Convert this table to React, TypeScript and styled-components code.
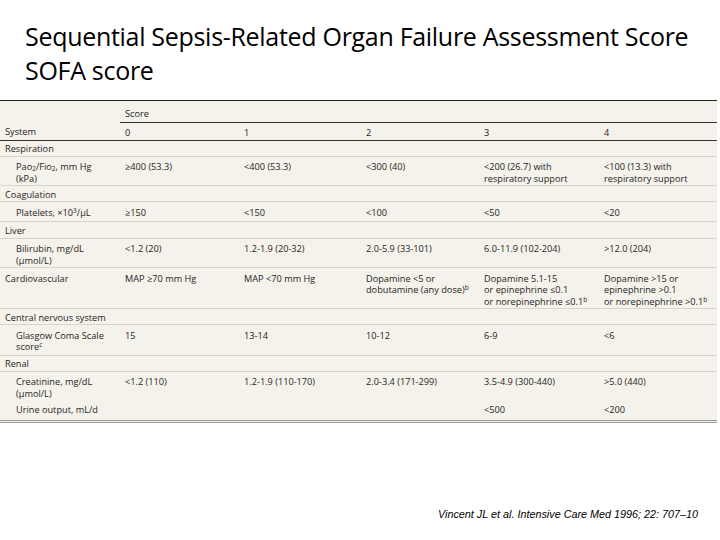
import React from "react"
import styled, { createGlobalStyle } from "styled-components"

const GlobalStyle = createGlobalStyle`
  html, body {
    margin: 0;
    padding: 0;
    background: #ffffff;
  }
  body {
    width: 720px;
    height: 540px;
    overflow: hidden;
  }
`

const Slide = styled.div`
  width: 720px;
  height: 540px;
  display: flex;
  flex-direction: column;
  background: #fff;
`

const Title = styled.h1`
  margin: 0;
  padding: 19px 0 0 25px;
  font-family: "Open Sans", "Liberation Sans", sans-serif;
  font-weight: 400;
  font-size: 25px;
  line-height: 34px;
  color: #000;
  letter-spacing: -0.3px;
`

const TableWrap = styled.div`
  margin-top: 13px;
  width: 717px;
  background: #f4f2ea;
  border-top: 1px solid #222;
  border-bottom: 3px double #9a9a9a;
`

const Table = styled.table`
  width: 100%;
  border-collapse: collapse;
  table-layout: fixed;
  font-family: "Open Sans", "Liberation Sans", sans-serif;
  font-size: 9.2px;
  line-height: 11.5px;
  color: #1f1f1f;
`

const Col = styled.col<{ $w: number }>`
  width: ${p => p.$w}px;
`

type CellProps = {
  $indent?: boolean
  $line?: "dark" | "light" | "none"
  $pt?: number
  $pb?: number
}

const Cell = styled.td<CellProps>`
  vertical-align: top;
  padding: ${p => p.$pt ?? 4.5}px 4px ${p => p.$pb ?? 1}px ${p => (p.$indent ? 16 : 5)}px;
  border-bottom: ${p =>
    p.$line === "none" ? "none" : p.$line === "dark" ? "1px solid #333" : "1px solid #d8d5cd"};
`

const HeadCell = styled(Cell)`
  color: #1a1a1a;
`

const Sup = styled.span`
  font-size: 6.5px;
  line-height: 0;
  vertical-align: 3px;
`

const Sub = styled.span`
  font-size: 6.5px;
  line-height: 0;
  vertical-align: -1px;
`

type Row = {
  label: React.ReactNode
  values?: React.ReactNode[]
  category?: boolean
  flat?: boolean
  line?: "light" | "none"
  pt?: number
  pb?: number
}

const rows: Row[] = [
  { label: "Respiration", category: true },
  {
    label: (
      <>
        Pao<Sub>2</Sub>/Fio<Sub>2</Sub>, mm Hg
        <br />
        (kPa)
      </>
    ),
    values: [
      "≥400 (53.3)",
      "<400 (53.3)",
      "<300 (40)",
      <>
        &lt;200 (26.7) with
        <br />
        respiratory support
      </>,
      <>
        &lt;100 (13.3) with
        <br />
        respiratory support
      </>,
    ],
  },
  { label: "Coagulation", category: true },
  {
    label: (
      <>
        Platelets, ×10<Sup>3</Sup>/µL
      </>
    ),
    values: ["≥150", "<150", "<100", "<50", "<20"],
    pb: 3,
  },
  { label: "Liver", category: true },
  {
    label: (
      <>
        Bilirubin, mg/dL
        <br />
        (µmol/L)
      </>
    ),
    values: ["<1.2 (20)", "1.2-1.9 (20-32)", "2.0-5.9 (33-101)", "6.0-11.9 (102-204)", ">12.0 (204)"],
  },
  {
    label: "Cardiovascular",
    flat: true,
    values: [
      "MAP ≥70 mm Hg",
      "MAP <70 mm Hg",
      <>
        Dopamine &lt;5 or
        <br />
        dobutamine (any dose)<Sup>b</Sup>
      </>,
      <>
        Dopamine 5.1-15
        <br />
        or epinephrine ≤0.1
        <br />
        or norepinephrine ≤0.1<Sup>b</Sup>
      </>,
      <>
        Dopamine &gt;15 or
        <br />
        epinephrine &gt;0.1
        <br />
        or norepinephrine &gt;0.1<Sup>b</Sup>
      </>,
    ],
  },
  { label: "Central nervous system", category: true },
  {
    label: (
      <>
        Glasgow Coma Scale
        <br />
        score<Sup>c</Sup>
      </>
    ),
    values: ["15", "13-14", "10-12", "6-9", "<6"],
    pb: 2,
  },
  { label: "Renal", category: true },
  {
    label: (
      <>
        Creatinine, mg/dL
        <br />
        (µmol/L)
      </>
    ),
    values: ["<1.2 (110)", "1.2-1.9 (110-170)", "2.0-3.4 (171-299)", "3.5-4.9 (300-440)", ">5.0 (440)"],
    line: "none",
  },
  {
    label: "Urine output, mL/d",
    values: ["", "", "", "<500", "<200"],
    line: "none",
    pt: 3.5,
    pb: 4.5,
  },
]

const Citation = styled.div`
  margin-top: auto;
  margin-bottom: 20px;
  padding-left: 438px;
  font-family: "Liberation Sans", sans-serif;
  font-style: italic;
  font-size: 10.8px;
  color: #000;
`

const widths = [120, 119, 122, 118, 120, 118]

export default function App() {
  return (
    <Slide>
      <GlobalStyle />
      <Title>
        Sequential Sepsis-Related Organ Failure Assessment Score
        <br />
        SOFA score
      </Title>
      <TableWrap>
        <Table>
          <colgroup>
            {widths.map((w, i) => (
              <Col key={i} $w={w} />
            ))}
          </colgroup>
          <tbody>
            <tr>
              <HeadCell $line="none" $pt={7} $pb={2} />
              <HeadCell colSpan={5} $line="dark" $pt={7} $pb={2}>
                Score
              </HeadCell>
            </tr>
            <tr>
              <HeadCell $line="dark" $pt={4} $pb={1.5}>
                System
              </HeadCell>
              {["0", "1", "2", "3", "4"].map(s => (
                <HeadCell key={s} $line="dark" $pt={4} $pb={1.5}>
                  {s}
                </HeadCell>
              ))}
            </tr>
            {rows.map((r, i) =>
              r.category ? (
                <tr key={i}>
                  <Cell colSpan={6} $pt={2.5} $pb={1.2}>
                    {r.label}
                  </Cell>
                </tr>
              ) : (
                <tr key={i}>
                  <Cell $indent={!r.flat} $line={r.line} $pt={r.pt} $pb={r.pb}>
                    {r.label}
                  </Cell>
                  {r.values!.map((v, j) => (
                    <Cell key={j} $line={r.line} $pt={r.pt} $pb={r.pb}>
                      {v}
                    </Cell>
                  ))}
                </tr>
              )
            )}
          </tbody>
        </Table>
      </TableWrap>
      <Citation>Vincent JL et al. Intensive Care Med 1996; 22: 707–10</Citation>
    </Slide>
  )
}
